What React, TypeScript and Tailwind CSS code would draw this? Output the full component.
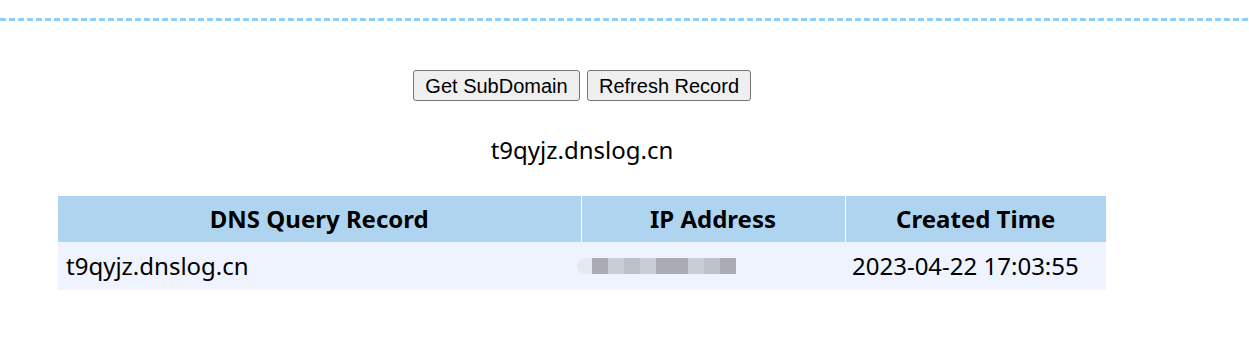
import React from "react";

const blurBlocks = [
  { w: "w-[16px]", c: "bg-[#a9acb4]" },
  { w: "w-[16px]", c: "bg-[#c9cdd5]" },
  { w: "w-[16px]", c: "bg-[#bcc0c8]" },
  { w: "w-[16px]", c: "bg-[#c9cdd5]" },
  { w: "w-[32px]", c: "bg-[#a9acb4]" },
  { w: "w-[16px]", c: "bg-[#c9cdd5]" },
  { w: "w-[16px]", c: "bg-[#bec2ca]" },
  { w: "w-[16px]", c: "bg-[#a9acb4]" },
];

const App = () => {
  return (
    <div className="w-[1249px] h-[345px] bg-white text-black">
      <div className="h-[18px]" />
      <div className="h-[3px] w-full bg-[repeating-linear-gradient(to_right,#8ccffa_0_6px,transparent_6px_9px)]" />

      <div className="w-[1164px] flex flex-col items-center">
        <div className="mt-[49px] flex gap-[7px] font-['Liberation_Sans',Arial,sans-serif] text-[20px] leading-none">
          <button className="h-[31px] w-[167px] bg-[#efefef] border border-[#767676] rounded-[3px]">
            Get SubDomain
          </button>
          <button className="h-[31px] w-[164px] bg-[#efefef] border border-[#767676] rounded-[3px]">
            Refresh Record
          </button>
        </div>

        <div className="mt-[34px] font-['Noto_Sans',sans-serif] text-[24px] leading-[30px]">
          t9qyjz.dnslog.cn
        </div>

        <table className="mt-[31px] w-[1048px] border-collapse font-['Noto_Sans',sans-serif] text-[24px]">
          <thead>
            <tr className="bg-[#afd4ef] h-[46px]">
              <th className="w-[523px] font-bold border-r border-white">DNS Query Record</th>
              <th className="w-[264px] font-bold border-r border-white">IP Address</th>
              <th className="font-bold">Created Time</th>
            </tr>
          </thead>
          <tbody>
            <tr className="bg-[#eef3fd] h-[48px]">
              <td className="pl-[8px] text-left">t9qyjz.dnslog.cn</td>
              <td className="text-left">
                <div className="flex -ml-[4px] h-[16px]">
                  <div className="w-[15px] bg-[#e6e9ef] rounded-l-full" />
                  {blurBlocks.map((b, i) => (
                    <div key={i} className={`${b.w} ${b.c}`} />
                  ))}
                </div>
              </td>
              <td className="pl-[7px] text-left">2023-04-22 17:03:55</td>
            </tr>
          </tbody>
        </table>
      </div>
    </div>
  );
};

export default App;
